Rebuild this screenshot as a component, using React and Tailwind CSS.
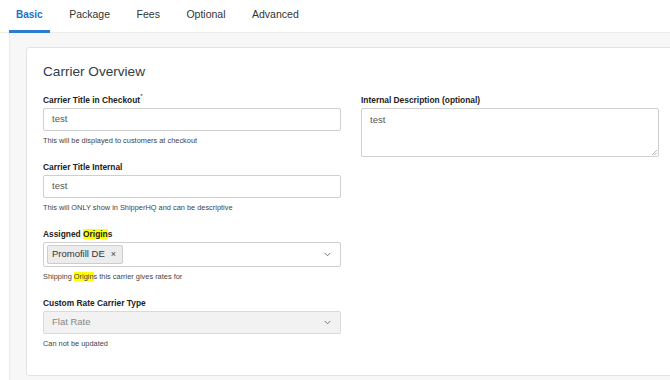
import React from "react";

const tabs = ["Basic", "Package", "Fees", "Optional", "Advanced"];

const Hl = ({ children }) => <span className="bg-[#ffff00]">{children}</span>;

const Chevron = () => (
  <svg width="7" height="5" viewBox="0 0 7 5" className="shrink-0">
    <polyline points="0.8,1 3.5,3.8 6.2,1" fill="none" stroke="#777" strokeWidth="1" />
  </svg>
);

const Label = ({ children }) => (
  <div className="text-[8.4px] leading-[12px] font-bold text-[#222] mb-[2px]">{children}</div>
);

const Help = ({ children }) => (
  <div className="text-[7.4px] leading-[10px] text-[#444] mt-[5px]">{children}</div>
);

const App = () => {
  return (
    <div className="w-[670px] h-[380px] overflow-hidden bg-white font-['Liberation_Sans',Arial,sans-serif]">
      {/* Tabs */}
      <div className="h-[33px] flex items-stretch gap-[12.5px] pl-[9px] border-b border-[#ececec]">
        {tabs.map((t, i) => (
          <div
            key={t}
            className={
              i === 0
                ? "px-[7px] flex items-center pb-[1px] border-b-[3px] border-[#2b7bd0] text-[10px] font-bold text-[#1f6fc5] mb-[-1px]"
                : "px-[7px] flex items-center pb-[1px] border-b-[3px] border-transparent text-[10.5px] text-[#333] mb-[-1px]"
            }
          >
            {t}
          </div>
        ))}
      </div>

      {/* Content area */}
      <div className="ml-[9px] h-full border-l border-[#eaeaea] bg-[#f7f7f7] pl-[16px] pt-[14px]">
        <div className="w-[660px] bg-white border border-[#e3e3e3] rounded-[3px] pl-[16px] pt-[15px] pb-[26px]">
          <h2 className="text-[13.6px] leading-[17px] text-[#333b46] mb-[14px]">Carrier Overview</h2>

          <div className="grid grid-cols-[298px_298px] gap-x-[20px]">
            {/* Left column */}
            <div className="flex flex-col">
              <div className="mb-[15px]">
                <Label>
                  Carrier Title in Checkout<sup className="text-[6px] font-normal align-[2px]">*</sup>
                </Label>
                <div className="h-[23px] border border-[#cfcfcf] rounded-[2px] flex items-center px-[8px] text-[9.5px] text-[#555]">
                  test
                </div>
                <Help>This will be displayed to customers at checkout</Help>
              </div>

              <div className="mb-[15px]">
                <Label>Carrier Title Internal</Label>
                <div className="h-[23px] border border-[#cfcfcf] rounded-[2px] flex items-center px-[8px] text-[9.5px] text-[#555]">
                  test
                </div>
                <Help>This will ONLY show in ShipperHQ and can be descriptive</Help>
              </div>

              <div className="mb-[15px]">
                <Label>
                  Assigned <Hl>Origin</Hl>s
                </Label>
                <div className="h-[25px] border border-[#cfcfcf] rounded-[2px] flex items-center justify-between pl-[3px] pr-[9px]">
                  <div className="h-[19px] flex items-center gap-[6px] pl-[4px] pr-[6px] bg-[#ececec] border border-[#cdcdcd] rounded-[2px] text-[9.5px] text-[#333]">
                    <span>Promofill DE</span>
                    <span className="text-[9px] text-[#444]">×</span>
                  </div>
                  <Chevron />
                </div>
                <Help>
                  Shipping <Hl>Origin</Hl>s this carrier gives rates for
                </Help>
              </div>

              <div>
                <Label>Custom Rate Carrier Type</Label>
                <div className="h-[23px] border border-[#dadada] rounded-[2px] bg-[#f2f2f2] flex items-center justify-between pl-[8px] pr-[9px] text-[9.5px] text-[#888]">
                  <span>Flat Rate</span>
                  <Chevron />
                </div>
                <Help>Can not be updated</Help>
              </div>
            </div>

            {/* Right column */}
            <div>
              <Label>Internal Description (optional)</Label>
              <div className="relative h-[49px] border border-[#cfcfcf] rounded-[2px] px-[8px] pt-[5px] text-[9.5px] leading-[12px] text-[#555]">
                test
                <svg width="6" height="6" viewBox="0 0 6 6" className="absolute right-[1px] bottom-[1px]">
                  <line x1="1" y1="6" x2="6" y2="1" stroke="#999" strokeWidth="0.7" />
                  <line x1="3.5" y1="6" x2="6" y2="3.5" stroke="#999" strokeWidth="0.7" />
                </svg>
              </div>
            </div>
          </div>
        </div>
      </div>
    </div>
  );
};

export default App;
